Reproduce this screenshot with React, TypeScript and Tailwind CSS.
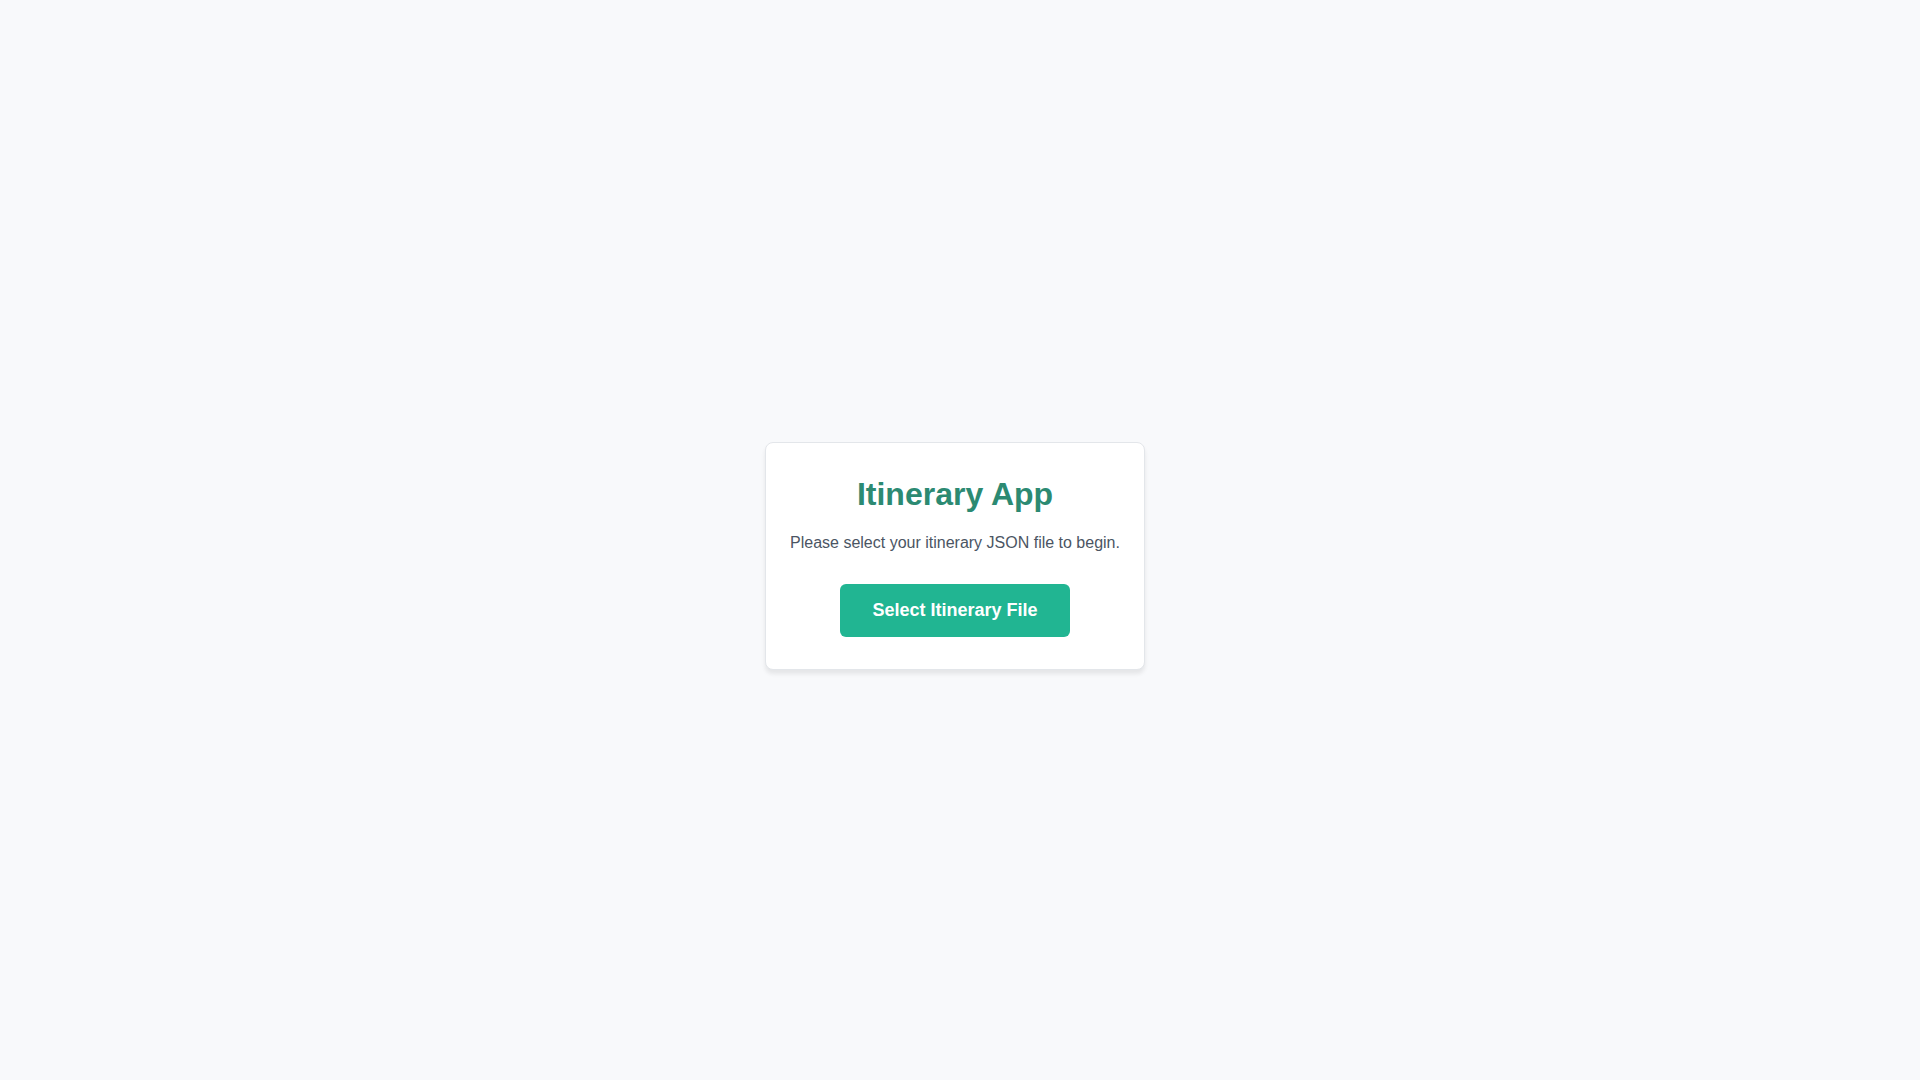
import React, { useRef } from 'react';

export default function App() {
  const inputRef = useRef<HTMLInputElement>(null);

  return (
    <div
      className="min-h-screen bg-[#f8f9fb] flex justify-center pt-[442px] pr-[10px]"
      style={{ fontFamily: '"Liberation Sans", Arial, sans-serif' }}
    >
      {/* start card */}
      <div className="self-start bg-white border border-[#e3e6ea] rounded-lg shadow-[0_4px_4px_rgba(0,0,0,0.08)] px-6 py-8 text-center">
        <h1 className="text-[32px] leading-[1.2] font-bold text-[#2c8a72] mb-[18px]">Itinerary App</h1>
        <p className="text-base leading-6 text-[#4b5563] mb-[29px]">
          Please select your itinerary JSON file to begin.
        </p>
        <input ref={inputRef} type="file" accept=".json,application/json" className="hidden" />
        <button
          onClick={() => inputRef.current?.click()}
          className="bg-[#21b592] hover:bg-[#1ca283] text-white text-lg leading-[29px] font-bold px-8 py-3 rounded-md"
        >
          Select Itinerary File
        </button>
      </div>
    </div>
  );
}
